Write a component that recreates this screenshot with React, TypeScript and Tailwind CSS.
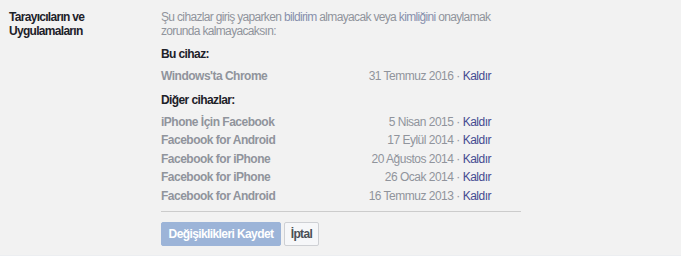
import React from "react";

interface Dispositivo {
  nome: string;
  data: string;
}

const esteDispositivo: Dispositivo = { nome: "Windows'ta Chrome", data: "31 Temmuz 2016" };

const outrosDispositivos: Dispositivo[] = [
  { nome: "iPhone İçin Facebook", data: "5 Nisan 2015" },
  { nome: "Facebook for Android", data: "17 Eylül 2014" },
  { nome: "Facebook for iPhone", data: "20 Ağustos 2014" },
  { nome: "Facebook for iPhone", data: "26 Ocak 2014" },
  { nome: "Facebook for Android", data: "16 Temmuz 2013" },
];

function Linha({ d }: { d: Dispositivo }) {
  return (
    <div className="flex h-[18.5px] w-[330px] items-start justify-between leading-[14px]">
      <span className="font-bold tracking-[-0.5px] text-[#90949c]">{d.nome}</span>
      <span className="tracking-[-0.5px] text-[#90949c]">
        {d.data} · <a className="text-[#454b91]">Kaldır</a>
      </span>
    </div>
  );
}

export default function App() {
  return (
    <div
      className="flex h-[256px] w-full flex-col bg-[#f2f2f2] text-[12px] leading-[14px] tracking-[-0.5px]"
      style={{ fontFamily: '"Liberation Sans", Arial, sans-serif' }}
    >
      <div className="flex flex-1 pt-[10px]">
        <div className="w-[161px] pl-[9px] font-bold tracking-[-0.7px] text-[#1d2129]">
          Tarayıcıların ve
          <br />
          Uygulamaların
        </div>
        <div className="flex w-[360px] flex-col">
          <p className="tracking-[-0.66px] text-[#90949c]">
            Şu cihazlar giriş yaparken <span className="text-[#8790ad]">bildirim</span> almayacak veya{" "}
            <span className="text-[#8790ad]">kimliğini</span> onaylamak zorunda kalmayacaksın:
          </p>
          <h4 className="mt-[9px] font-bold tracking-[-0.6px] text-[#1d2129]">Bu cihaz:</h4>
          <div className="mt-[8px]">
            <Linha d={esteDispositivo} />
          </div>
          <h4 className="mt-[5.5px] font-bold tracking-[-0.6px] text-[#1d2129]">Diğer cihazlar:</h4>
          <div className="mt-[7.6px] flex flex-col">
            {outrosDispositivos.map((d, idx) => (
              <Linha key={idx} d={d} />
            ))}
          </div>
          <div className="mt-[4px] h-px w-full bg-[#cccccc]" />
          <div className="mt-[10px] flex gap-[3px]">
            <button className="h-[24px] w-[120px] rounded-[2px] border border-[#9cb4d8] bg-[#9cb4d8] font-bold tracking-[-0.6px] text-white">
              Değişiklikleri Kaydet
            </button>
            <button className="h-[24px] w-[35px] rounded-[2px] border border-[#ced0d4] bg-[#f6f7f9] font-bold tracking-[-0.6px] text-[#4b4f56]">
              İptal
            </button>
          </div>
        </div>
      </div>
      <div className="h-px bg-[#eceef1]" />
    </div>
  );
}
